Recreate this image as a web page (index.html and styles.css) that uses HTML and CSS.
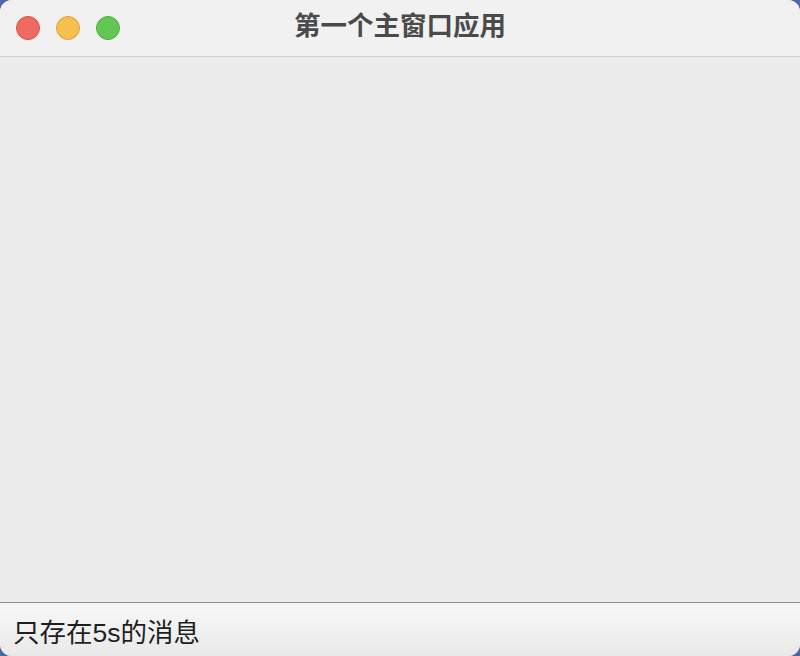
FILE: index.html
```html
<!DOCTYPE html>
<html lang="zh">
<head>
<meta charset="utf-8">
<link rel="stylesheet" href="styles.css">
</head>
<body>
<div class="window">
  <div class="titlebar">
    <div class="lights">
      <span class="light red"></span>
      <span class="light yellow"></span>
      <span class="light green"></span>
    </div>
    <div class="title">第一个主窗口应用</div>
  </div>
  <div class="content"></div>
  <div class="statusbar">只存在5s的消息</div>
</div>
</body>
</html>
```
FILE: styles.css
```css
html, body {
  margin: 0;
  padding: 0;
  width: 800px;
  height: 656px;
  background: #4b68a3;
  overflow: hidden;
}
.window {
  width: 800px;
  height: 656px;
  border-radius: 12px;
  overflow: hidden;
  display: flex;
  flex-direction: column;
  background: #ececec;
  font-family: "Liberation Sans", "Noto Sans CJK SC", sans-serif;
}
.titlebar {
  position: relative;
  height: 56px;
  flex: none;
  background: #f1f1f1;
  border-bottom: 1px solid #cfcfcf;
  display: flex;
  align-items: center;
}
.lights {
  display: flex;
  gap: 16px;
  padding-left: 16px;
}
.light {
  width: 24px;
  height: 24px;
  border-radius: 50%;
  box-sizing: border-box;
}
.red { background: #ee6a5f; border: 1px solid #d65045; }
.yellow { background: #f6c050; border: 1px solid #dda23a; }
.green { background: #61c654; border: 1px solid #4ead42; }
.title {
  position: absolute;
  left: 0;
  right: 0;
  top: 0;
  height: 56px;
  line-height: 53px;
  text-align: center;
  font-size: 26.5px;
  font-weight: bold;
  color: #4a4a4a;
}
.content {
  flex: 1;
  background: #ececec;
}
.statusbar {
  flex: none;
  height: 54px;
  box-sizing: border-box;
  border-top: 1px solid #8d8d8d;
  background: linear-gradient(#f8f8f8, #e9e9e9);
  padding: 3px 0 0 13px;
  font-size: 26.5px;
  line-height: 54px;
  color: #1f1f1f;
  overflow: hidden;
}
```
